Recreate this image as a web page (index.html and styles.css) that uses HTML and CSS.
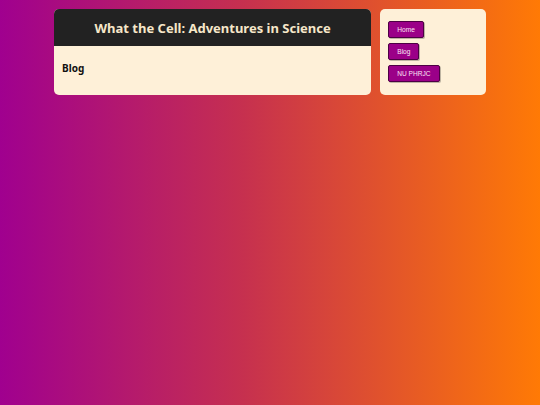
FILE: index.html
```html
<!DOCTYPE html>
<html>
<head>
<meta charset="utf-8">
<link rel="stylesheet" href="styles.css">
</head>
<body>
<div class="wrap">
  <div class="card main">
    <div class="header"><h1 class="title">What the Cell: Adventures in Science</h1></div>
    <div class="content"><h2 class="page">Blog</h2></div>
  </div>
  <div class="card side">
    <button class="btn">Home</button>
    <button class="btn">Blog</button>
    <button class="btn">NU PHRJC</button>
  </div>
</div>
</body>
</html>
```
FILE: styles.css
```css
html, body { margin: 0; height: 100%; }
body {
  background: linear-gradient(to right, #a0008f 0%, #c6304f 45%, #ff7a05 100%);
  font-family: "Noto Sans", sans-serif;
  padding-top: 9px;
  box-sizing: border-box;
}
.wrap {
  width: 432px;
  margin: 0 auto;
  display: grid;
  grid-template-columns: 3fr 1fr;
  gap: 9px;
}
.card {
  background: #fef0d8;
  border-radius: 5px;
  overflow: hidden;
}
.main { height: 86px; }
.header {
  background: #222222;
  height: 37px;
  display: flex;
  align-items: center;
  justify-content: center;
}
.title {
  margin: 0;
  color: #f6e7c9;
  font-size: 13px;
  font-weight: 700;
}
.content { padding: 15px 8px; }
.page { margin: 0; font-size: 10px; font-weight: 700; color: #111; }
.side {
  padding: 12px 8px;
  display: flex;
  flex-direction: column;
  align-items: flex-start;
  gap: 5px;
}
.btn {
  background: #9b0088;
  color: #fbe6f4;
  border: 1px solid #4d0044;
  border-radius: 2px;
  font-family: "Liberation Sans", Arial, sans-serif;
  font-size: 6.6px;
  height: 17px;
  padding: 0 8px;
  box-shadow: 1px 1px 0 rgba(0,0,0,0.25);
}
```
